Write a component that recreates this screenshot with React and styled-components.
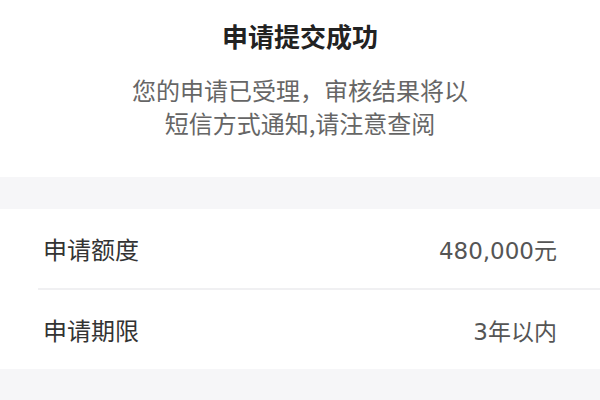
import React from "react";
import styled, { createGlobalStyle } from "styled-components";

const GlobalStyle = createGlobalStyle`
  html, body {
    margin: 0;
    padding: 0;
    background: #f6f6f8;
    font-family: "Noto Sans CJK SC", "Noto Sans", sans-serif;
  }
`;

const rows = [
  { label: "申请额度", value: "480,000元" },
  { label: "申请期限", value: "3年以内" },
];

const App = () => {
  return (
    <Page>
      <GlobalStyle />
      <Header>
        <Title>申请提交成功</Title>
        <Message>
          您的申请已受理，审核结果将以
          <br />
          短信方式通知,请注意查阅
        </Message>
      </Header>

      <InfoCard>
        {rows.map((row, i) => (
          <Row key={row.label} divided={i > 0}>
            <Label>{row.label}</Label>
            <Value>{row.value}</Value>
          </Row>
        ))}
      </InfoCard>
    </Page>
  );
};

export default App;

const Page = styled.div`
  width: 600px;
  height: 400px;
  background: #f6f6f8;
  display: flex;
  flex-direction: column;
  overflow: hidden;
`;

const Header = styled.div`
  background: #fff;
  display: flex;
  flex-direction: column;
  align-items: center;
  padding: 18px 0 38px;
`;

const Title = styled.h2`
  margin: 0;
  font-size: 26px;
  line-height: 36px;
  font-weight: 700;
  color: #222;
`;

const Message = styled.p`
  margin: 19px 0 0;
  font-size: 24px;
  line-height: 33px;
  color: #666;
  text-align: center;
`;

const InfoCard = styled.div`
  background: #fff;
  margin-top: 32px;
  padding-left: 38px;
`;

const Row = styled.div.withConfig({
  shouldForwardProp: (p) => p !== "divided",
})`
  display: flex;
  align-items: center;
  justify-content: space-between;
  height: 79px;
  padding: 0 43px 0 5px;
  border-top: ${(p) => (p.divided ? "2px solid #f0f0f2" : "none")};
`;

const Label = styled.span`
  font-size: 24px;
  color: #333;
`;

const Value = styled.span`
  font-family: "DejaVu Sans", "Noto Sans CJK SC", sans-serif;
  font-size: 23px;
  font-weight: 400;
  color: #555;
`;
